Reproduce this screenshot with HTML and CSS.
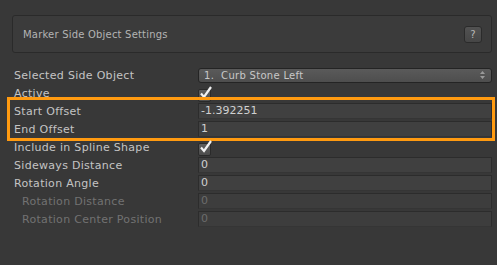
FILE: index.html
```html
<!DOCTYPE html>
<html lang="en">
<head>
  <meta charset="UTF-8" />
  <title>Marker Side Object Settings</title>
  <link rel="stylesheet" href="styles.css">
</head>
<body>
  <div class="header">
    <span class="header-title">Marker Side Object Settings</span>
    <button class="help">?</button>
  </div>

  <div class="props">
    <div class="row">
      <label>Selected Side Object</label>
      <div class="popup">
        <span>1.&nbsp; Curb Stone Left</span>
        <svg class="arrows" width="5" height="8" viewBox="0 0 5 8"><path d="M2.5 0 L5 3 L0 3 Z M0 5 L5 5 L2.5 8 Z" fill="#9a9a9a"/></svg>
      </div>
    </div>
    <div class="row">
      <label>Active</label>
      <span class="check"><svg width="14" height="14" viewBox="0 0 14 14"><path d="M2 7.5 L5 11 L12 1" stroke="#f2f2f2" stroke-width="2.2" fill="none"/></svg></span>
    </div>
    <div class="highlight">
      <div class="row">
        <label>Start Offset</label>
        <div class="field">-1.392251</div>
      </div>
      <div class="row">
        <label>End Offset</label>
        <div class="field">1</div>
      </div>
    </div>
    <div class="row">
      <label>Include in Spline Shape</label>
      <span class="check"><svg width="14" height="14" viewBox="0 0 14 14"><path d="M2 7.5 L5 11 L12 1" stroke="#f2f2f2" stroke-width="2.2" fill="none"/></svg></span>
    </div>
    <div class="row">
      <label>Sideways Distance</label>
      <div class="field">0</div>
    </div>
    <div class="row">
      <label>Rotation Angle</label>
      <div class="field">0</div>
    </div>
    <div class="row disabled">
      <label>Rotation Distance</label>
      <div class="field">0</div>
    </div>
    <div class="row disabled">
      <label>Rotation Center Position</label>
      <div class="field">0</div>
    </div>
  </div>
</body>
</html>
```

FILE: styles.css
```css
body {
  margin: 0;
  background: #383838;
  font-family: "DejaVu Sans", Verdana, sans-serif;
  font-size: 11px;
  color: #c4c4c4;
}
.header {
  margin: 15px 5px 0 12px;
  height: 36px;
  border: 1px solid #2a2a2a;
  border-radius: 3px;
  background: #3b3b3b;
  display: flex;
  align-items: center;
  justify-content: space-between;
  padding: 0 9px 0 10px;
}
.header-title {
  font-size: 10px;
  color: #b4b4b4;
  letter-spacing: 0.2px;
}
.help {
  width: 18px;
  height: 17px;
  padding: 0;
  border: 1px solid #2b2b2b;
  border-radius: 3px;
  background: linear-gradient(#525252, #464646);
  color: #b8b8b8;
  font-family: "DejaVu Sans", sans-serif;
  font-size: 10px;
}
.props {
  padding: 13px 5px 0 14px;
}
.row {
  display: flex;
  align-items: center;
  height: 18px;
}
.row label {
  width: 184px;
  flex: none;
  letter-spacing: 0.3px;
}
.field {
  flex: 1;
  height: 14px;
  line-height: 14px;
  padding-left: 2px;
  background: #404040;
  border: 1px solid #2c2c2c;
  border-bottom-color: #353535;
  color: #d0d0d0;
}
.popup {
  flex: 1;
  height: 13px;
  line-height: 13px;
  padding: 0 6px 0 5px;
  border: 1px solid #242424;
  border-radius: 3px;
  background: linear-gradient(#5a5a5a, #4e4e4e);
  color: #c8c8c8;
  font-size: 10px;
  letter-spacing: 0.3px;
  display: flex;
  justify-content: space-between;
  align-items: center;
}
.check {
  position: relative;
  width: 11px;
  height: 11px;
  margin-top: 4px;
  border: 1px solid #2a2a2a;
  border-radius: 2px;
  background: linear-gradient(#5e5e5e, #4c4c4c);
}
.check svg {
  position: absolute;
  left: 0;
  top: -4px;
}
.highlight {
  position: relative;
}
.highlight::after {
  content: "";
  position: absolute;
  top: -5px;
  bottom: -3px;
  left: -7px;
  right: -3px;
  border: 3px solid #ff9a10;
}
.disabled label {
  padding-left: 8px;
  width: 176px;
  color: #727272;
}
.disabled .field {
  color: #6c6c6c;
  background: #3d3d3d;
}
```
